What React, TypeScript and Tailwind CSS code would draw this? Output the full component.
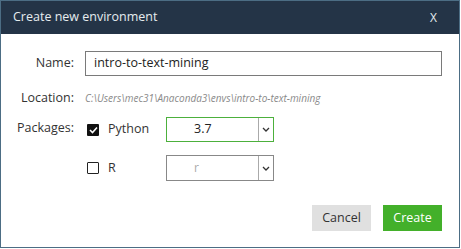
import React from "react";

const font = { fontFamily: '"Open Sans", "Noto Sans", sans-serif' };

function Chevron() {
  return (
    <svg width="8" height="5" viewBox="0 0 8 5" fill="none">
      <path d="M1 1 L4 4 L7 1" stroke="#333" strokeWidth="1.3" />
    </svg>
  );
}

export default function App() {
  return (
    <div className="w-[461px] h-[249px] bg-white" style={font}>
      <div className="w-[460px] h-[248px] border border-[#4c6d84] flex flex-col bg-white">
        <div className="h-[33px] bg-[#243447] flex items-center justify-between pl-[12px] pr-[22px] text-[12.5px] text-[#e6ecef]">
          <span>Create new environment</span>
          <span className="text-[12px]">X</span>
        </div>
        <div className="flex flex-col pl-[16px] pr-[17px] pt-[17px] text-[12.5px] text-[#333]">
          <div className="flex items-center h-[25px]">
            <div className="w-[57px] text-right">Name:</div>
            <div className="ml-[11px] flex-1 h-[25px] border border-[#7a7a7a] flex items-center px-[8px] text-[12.5px] text-[#222]">
              intro-to-text-mining
            </div>
          </div>
          <div className="flex items-center h-[16px] mt-[14px]">
            <div className="w-[57px] text-right">Location:</div>
            <div className="ml-[11px] text-[10px] italic text-[#8a8a8a]">
              C:\Users\mec31\Anaconda3\envs\intro-to-text-mining
            </div>
          </div>
          <div className="flex items-center h-[25px] mt-[11px]">
            <div className="w-[57px] text-right -mt-[3px]">Packages:</div>
            <div className="ml-[13px] w-[12px] h-[12px] bg-[#111] rounded-[1px] flex items-center justify-center">
              <svg width="9" height="8" viewBox="0 0 9 8" fill="none">
                <path d="M1 4 L3.5 6.5 L8 1.5" stroke="#fff" strokeWidth="1.6" />
              </svg>
            </div>
            <div className="ml-[9px] w-[58px] text-[12.5px]">Python</div>
            <div className="w-[108px] h-[25px] border border-[#4cb03c] flex items-stretch">
              <div className="flex-1 flex items-center pl-[27px] text-[12.5px] text-[#222]">3.7</div>
              <div className="w-[15px] border-l border-[#aaa] flex items-center justify-center">
                <Chevron />
              </div>
            </div>
          </div>
          <div className="flex items-center h-[26px] mt-[13px]">
            <div className="w-[57px]"></div>
            <div className="ml-[13px] w-[12px] h-[12px] border-[1.5px] border-[#222] rounded-[1px]"></div>
            <div className="ml-[9px] w-[58px] text-[12.5px]">R</div>
            <div className="w-[108px] h-[26px] border border-[#888] flex items-stretch">
              <div className="flex-1 flex items-center pl-[27px] text-[12px] text-[#aaa]">r</div>
              <div className="w-[15px] border-l border-[#aaa] flex items-center justify-center">
                <Chevron />
              </div>
            </div>
          </div>
          <div className="flex justify-end gap-[12px] mt-[24px] pr-[0px]">
            <button className="w-[59px] h-[26px] bg-[#e0e0e0] text-[12.5px] text-[#333]">Cancel</button>
            <button className="w-[59px] h-[26px] bg-[#43b02a] text-[12.5px] text-white">Create</button>
          </div>
        </div>
      </div>
    </div>
  );
}
